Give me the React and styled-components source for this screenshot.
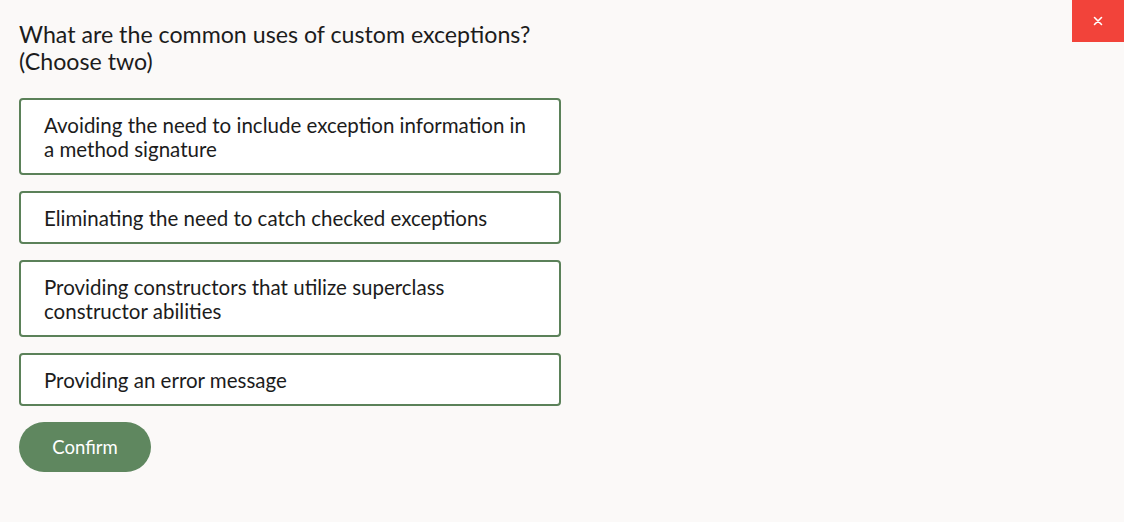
import React from "react";
import styled, { createGlobalStyle } from "styled-components";

const options = [
  "Avoiding the need to include exception information in a method signature",
  "Eliminating the need to catch checked exceptions",
  "Providing constructors that utilize superclass constructor abilities",
  "Providing an error message",
];

const App = () => {
  const [selected, setSelected] = React.useState([]);

  // 선택 토글 (최대 두 개)
  const toggle = (i) => {
    setSelected((prev) =>
      prev.includes(i) ? prev.filter((x) => x !== i) : [...prev, i].slice(-2)
    );
  };

  return (
    <>
      <GlobalStyle />
      <Page>
        <CloseButton aria-label="Close">
          <svg width="10" height="10" viewBox="0 0 10 10">
            <path
              d="M1.5 1.5 L8.5 8.5 M8.5 1.5 L1.5 8.5"
              stroke="#fff"
              strokeWidth="1.6"
              strokeLinecap="round"
            />
          </svg>
        </CloseButton>
        <Question>
          What are the common uses of custom exceptions?
          <br />
          (Choose two)
        </Question>
        <OptionList>
          {options.map((text, i) => (
            <Option
              key={i}
              $active={selected.includes(i)}
              onClick={() => toggle(i)}
            >
              {text}
            </Option>
          ))}
        </OptionList>
        <ConfirmButton>Confirm</ConfirmButton>
      </Page>
    </>
  );
};

const GlobalStyle = createGlobalStyle`
  html, body {
    margin: 0;
    padding: 0;
    background: #fbf9f8;
  }
  body {
    font-family: Lato, "Noto Sans", sans-serif;
    color: #1f1f1f;
  }
`;

const Page = styled.div`
  position: relative;
  min-height: 522px;
  box-sizing: border-box;
  padding: 21px 19px 0;
  display: flex;
  flex-direction: column;
  align-items: flex-start;
`;

const CloseButton = styled.button`
  position: absolute;
  top: 0;
  right: 0;
  width: 52px;
  height: 42px;
  border: none;
  background: #f2433a;
  display: flex;
  align-items: center;
  justify-content: center;
  cursor: pointer;
  padding: 0;
`;

const Question = styled.h2`
  margin: 0 0 23px;
  font-size: 23.2px;
  font-weight: 400;
  line-height: 27px;
  color: #1c1c1c;
`;

const OptionList = styled.div`
  display: flex;
  flex-direction: column;
  gap: 16px;
  width: 542px;
`;

const Option = styled.div`
  box-sizing: border-box;
  border: 2px solid #5b8159;
  border-radius: 4px;
  background: ${(p) => (p.$active ? "#eef3ec" : "#ffffff")};
  padding: 12.5px 24px 12.5px 23px;
  font-size: 20.5px;
  line-height: 24px;
  color: #1c1c1c;
  cursor: pointer;
`;

const ConfirmButton = styled.button`
  margin-top: 16px;
  width: 132px;
  height: 50px;
  border: none;
  border-radius: 25px;
  background: #5f875f;
  color: #ffffff;
  font-family: Lato, "Noto Sans", sans-serif;
  font-size: 18.5px;
  cursor: pointer;
`;

export default App;
